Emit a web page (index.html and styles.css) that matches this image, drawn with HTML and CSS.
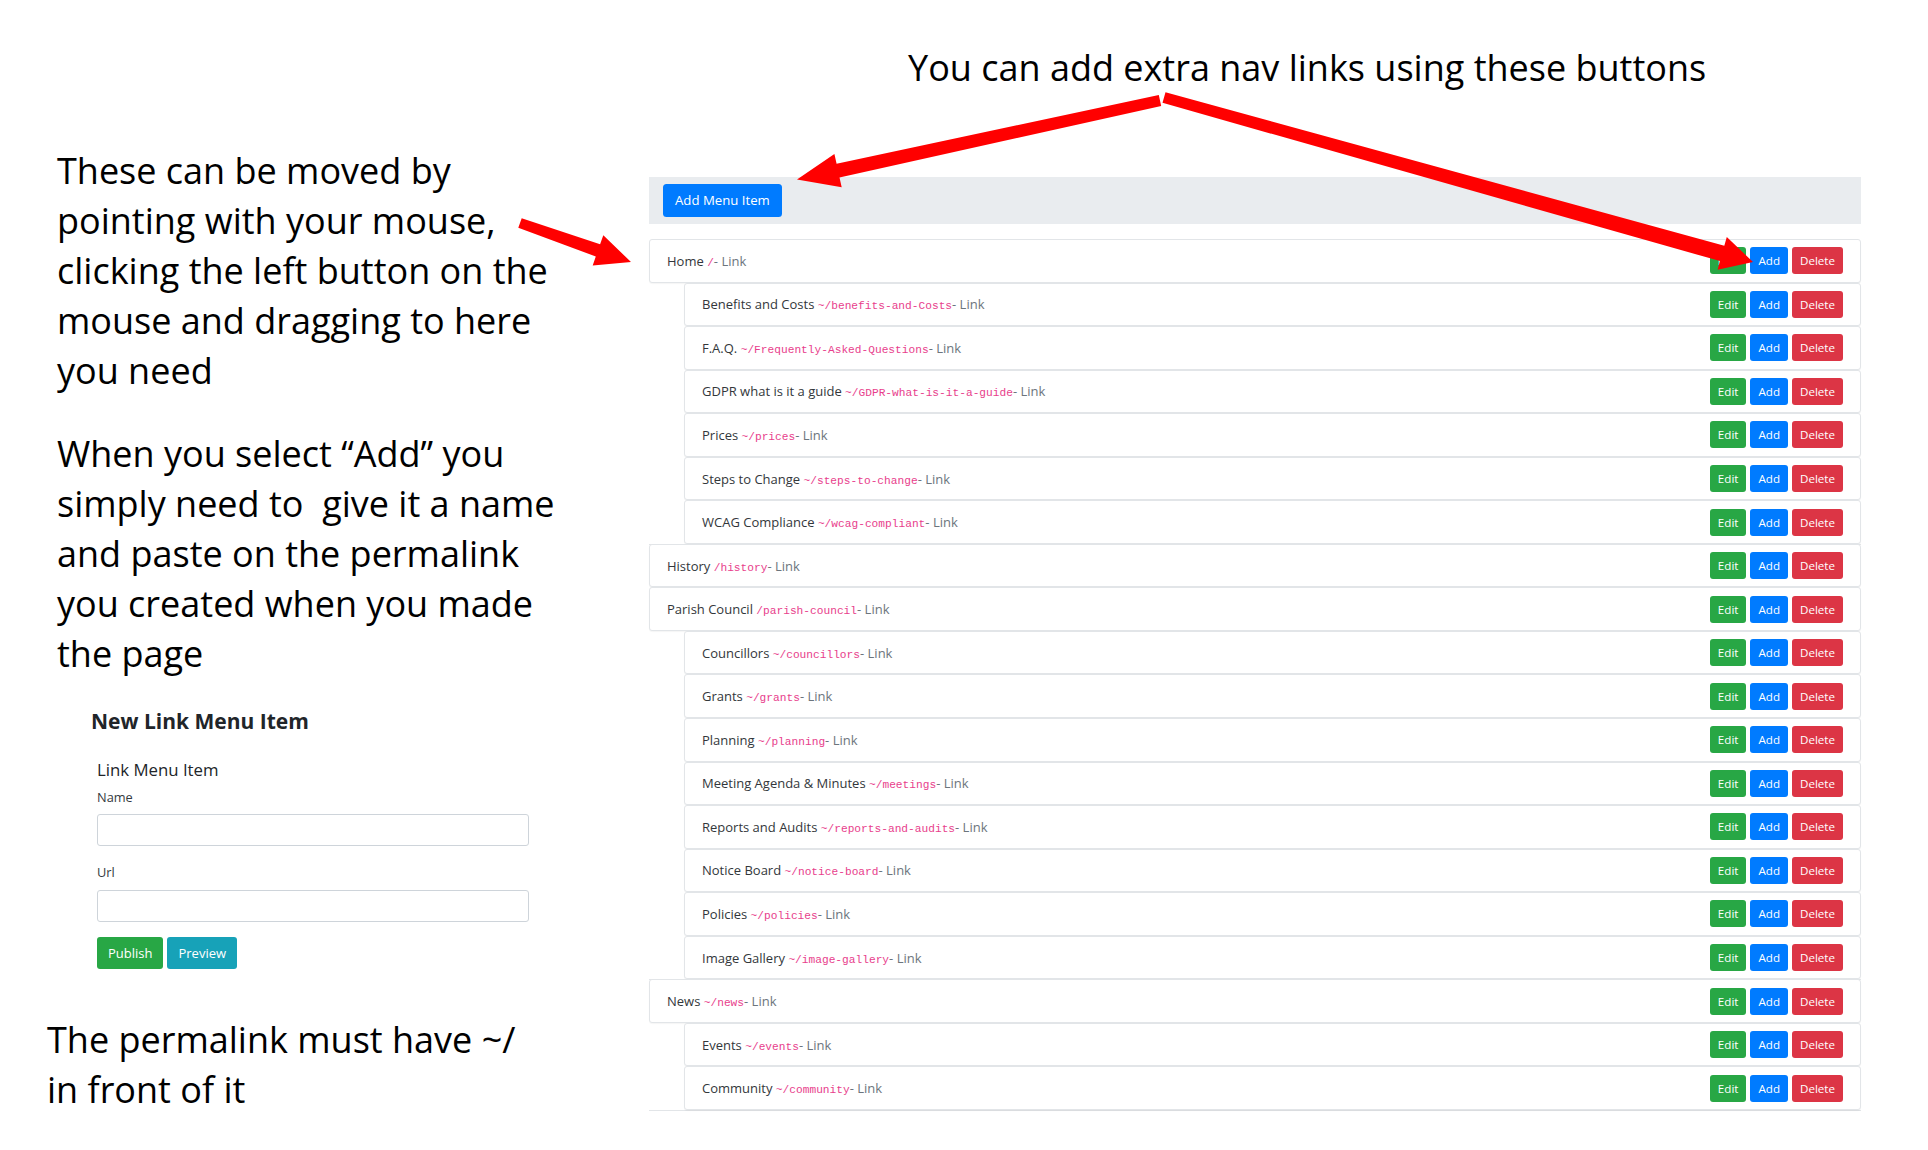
FILE: index.html
```html
<!DOCTYPE html>
<html lang="en">
<head>
<meta charset="utf-8">
<title>Menu editor help</title>
<link rel="stylesheet" href="styles.css">
</head>
<body>
<div class="page">
  <section class="notes">
    <p class="note">These can be moved by<br>pointing with your mouse,<br>clicking the left button on the<br>mouse and dragging to here<br>you need</p>
    <p class="note note-2">When you select “Add” you<br>simply need to&nbsp; give it a name<br>and paste on the permalink<br>you created when you made<br>the page</p>
    <div class="form-card">
      <h3 class="form-title">New Link Menu Item</h3>
      <div class="form">
        <div class="form-sub">Link Menu Item</div>
        <label class="form-label">Name</label>
        <input class="form-input" type="text">
        <label class="form-label form-label-url">Url</label>
        <input class="form-input form-input-url" type="text">
        <div class="form-actions">
          <button class="btn btn-publish">Publish</button>
          <button class="btn btn-preview">Preview</button>
        </div>
      </div>
    </div>
    <p class="note note-3">The permalink must have ~/<br>in front of it</p>
  </section>

  <section class="main">
    <div class="title">You can add extra nav links using these buttons</div>
    <div class="toolbar"><button class="btn btn-add-menu">Add Menu Item</button></div>
    <ul class="menu">
      <li class="group has-sub">
        <div class="row"><span class="label">Home <code>/</code><span class="muted">- Link</span></span><span class="actions"><button class="btn-sm edit">Edit</button><button class="btn-sm add">Add</button><button class="btn-sm del">Delete</button></span></div>
        <ul class="sub">
          <li><div class="row"><span class="label">Benefits and Costs <code>~/benefits-and-Costs</code><span class="muted">- Link</span></span><span class="actions"><button class="btn-sm edit">Edit</button><button class="btn-sm add">Add</button><button class="btn-sm del">Delete</button></span></div></li>
          <li><div class="row"><span class="label">F.A.Q. <code>~/Frequently-Asked-Questions</code><span class="muted">- Link</span></span><span class="actions"><button class="btn-sm edit">Edit</button><button class="btn-sm add">Add</button><button class="btn-sm del">Delete</button></span></div></li>
          <li><div class="row"><span class="label">GDPR what is it a guide <code>~/GDPR-what-is-it-a-guide</code><span class="muted">- Link</span></span><span class="actions"><button class="btn-sm edit">Edit</button><button class="btn-sm add">Add</button><button class="btn-sm del">Delete</button></span></div></li>
          <li><div class="row"><span class="label">Prices <code>~/prices</code><span class="muted">- Link</span></span><span class="actions"><button class="btn-sm edit">Edit</button><button class="btn-sm add">Add</button><button class="btn-sm del">Delete</button></span></div></li>
          <li><div class="row"><span class="label">Steps to Change <code>~/steps-to-change</code><span class="muted">- Link</span></span><span class="actions"><button class="btn-sm edit">Edit</button><button class="btn-sm add">Add</button><button class="btn-sm del">Delete</button></span></div></li>
          <li><div class="row"><span class="label">WCAG Compliance <code>~/wcag-compliant</code><span class="muted">- Link</span></span><span class="actions"><button class="btn-sm edit">Edit</button><button class="btn-sm add">Add</button><button class="btn-sm del">Delete</button></span></div></li>
        </ul>
      </li>
      <li class="group">
        <div class="row"><span class="label">History <code>/history</code><span class="muted">- Link</span></span><span class="actions"><button class="btn-sm edit">Edit</button><button class="btn-sm add">Add</button><button class="btn-sm del">Delete</button></span></div>
      </li>
      <li class="group has-sub">
        <div class="row"><span class="label">Parish Council <code>/parish-council</code><span class="muted">- Link</span></span><span class="actions"><button class="btn-sm edit">Edit</button><button class="btn-sm add">Add</button><button class="btn-sm del">Delete</button></span></div>
        <ul class="sub">
          <li><div class="row"><span class="label">Councillors <code>~/councillors</code><span class="muted">- Link</span></span><span class="actions"><button class="btn-sm edit">Edit</button><button class="btn-sm add">Add</button><button class="btn-sm del">Delete</button></span></div></li>
          <li><div class="row"><span class="label">Grants <code>~/grants</code><span class="muted">- Link</span></span><span class="actions"><button class="btn-sm edit">Edit</button><button class="btn-sm add">Add</button><button class="btn-sm del">Delete</button></span></div></li>
          <li><div class="row"><span class="label">Planning <code>~/planning</code><span class="muted">- Link</span></span><span class="actions"><button class="btn-sm edit">Edit</button><button class="btn-sm add">Add</button><button class="btn-sm del">Delete</button></span></div></li>
          <li><div class="row"><span class="label">Meeting Agenda &amp; Minutes <code>~/meetings</code><span class="muted">- Link</span></span><span class="actions"><button class="btn-sm edit">Edit</button><button class="btn-sm add">Add</button><button class="btn-sm del">Delete</button></span></div></li>
          <li><div class="row"><span class="label">Reports and Audits <code>~/reports-and-audits</code><span class="muted">- Link</span></span><span class="actions"><button class="btn-sm edit">Edit</button><button class="btn-sm add">Add</button><button class="btn-sm del">Delete</button></span></div></li>
          <li><div class="row"><span class="label">Notice Board <code>~/notice-board</code><span class="muted">- Link</span></span><span class="actions"><button class="btn-sm edit">Edit</button><button class="btn-sm add">Add</button><button class="btn-sm del">Delete</button></span></div></li>
          <li><div class="row"><span class="label">Policies <code>~/policies</code><span class="muted">- Link</span></span><span class="actions"><button class="btn-sm edit">Edit</button><button class="btn-sm add">Add</button><button class="btn-sm del">Delete</button></span></div></li>
          <li><div class="row"><span class="label">Image Gallery <code>~/image-gallery</code><span class="muted">- Link</span></span><span class="actions"><button class="btn-sm edit">Edit</button><button class="btn-sm add">Add</button><button class="btn-sm del">Delete</button></span></div></li>
        </ul>
      </li>
      <li class="group has-sub">
        <div class="row"><span class="label">News <code>~/news</code><span class="muted">- Link</span></span><span class="actions"><button class="btn-sm edit">Edit</button><button class="btn-sm add">Add</button><button class="btn-sm del">Delete</button></span></div>
        <ul class="sub">
          <li><div class="row"><span class="label">Events <code>~/events</code><span class="muted">- Link</span></span><span class="actions"><button class="btn-sm edit">Edit</button><button class="btn-sm add">Add</button><button class="btn-sm del">Delete</button></span></div></li>
          <li><div class="row"><span class="label">Community <code>~/community</code><span class="muted">- Link</span></span><span class="actions"><button class="btn-sm edit">Edit</button><button class="btn-sm add">Add</button><button class="btn-sm del">Delete</button></span></div></li>
        </ul>
      </li>
    </ul>
  </section>

  <svg class="arrows" width="1928" height="1150" viewBox="0 0 1928 1150" aria-hidden="true">
    <polygon points="1158.8,95.1 836.6,163.7 834.4,154.0 797,179.5 841.7,187.2 839.5,177.4 1161.2,105.9"/>
    <polygon points="1165.5,92.2 1724.3,245.7 1726.8,237.0 1753,262 1717.6,269.8 1720.0,261.1 1162.5,102.8"/>
    <polygon points="521.7,218.3 600.1,244.3 603.3,235.3 631,262 592.7,265.5 595.8,256.5 518.3,227.7"/>
  </svg>
</div>
</body>
</html>
```

FILE: styles.css
```css
* { box-sizing: border-box; }

html, body {
  margin: 0;
  padding: 0;
  background: #ffffff;
}

body {
  width: 1928px;
  height: 1150px;
  overflow: hidden;
  font-family: "Open Sans", "Noto Sans", sans-serif;
  color: #212529;
}

.page {
  position: relative;
  display: flex;
  width: 1928px;
  height: 1150px;
}

/* ---------- left annotations ---------- */
.notes {
  flex: none;
  width: 649px;
  padding: 146px 0 0 57px;
}

.note {
  margin: 0;
  font-family: "Open Sans", "Noto Sans", sans-serif;
  font-size: 36px;
  line-height: 50px;
  color: #000;
  white-space: nowrap;
}

.note-2 { margin-top: 33px; }

.note-3 {
  margin-top: 46px;
  margin-left: -10px;
}

/* ---------- form ---------- */
.form-card {
  margin-top: 29px;
  padding-left: 34px;
}

.form-title {
  margin: 0;
  font-size: 21px;
  line-height: 26px;
  font-weight: 700;
  letter-spacing: 0;
  color: #212529;
}

.form {
  padding-left: 6px;
  display: flex;
  flex-direction: column;
  align-items: flex-start;
}

.form-sub {
  margin-top: 26px;
  font-size: 16.8px;
  line-height: 20px;
  color: #212529;
}

.form-label {
  margin-top: 9px;
  font-size: 12.8px;
  line-height: 16px;
  color: #343a40;
}

.form-label-url { margin-top: 18px; }

.form-input {
  display: block;
  width: 432px;
  height: 32px;
  margin-top: 9px;
  border: 1px solid #ced4da;
  border-radius: 3px;
  background: #fff;
}

.form-input-url { margin-top: 10px; }

.form-actions {
  display: flex;
  gap: 4px;
  margin-top: 15px;
}

.btn {
  height: 32px;
  padding: 0 11px;
  border: none;
  border-radius: 3px;
  color: #fff;
  font-family: "Open Sans", "Noto Sans", sans-serif;
  font-size: 13px;
  line-height: 32px;
}

.btn-publish { background: #28a745; }
.btn-preview { background: #17a2b8; }

/* ---------- main panel ---------- */
.main {
  flex: none;
  width: 1212px;
  padding-top: 43px;
}

.title {
  padding-left: 259px;
  font-size: 36px;
  line-height: 50px;
  color: #000;
  white-space: nowrap;
}

.toolbar {
  margin-top: 84px;
  height: 47px;
  padding: 7px 14px;
  background: #e9ecef;
}

.btn-add-menu {
  height: 33px;
  padding: 0 12px;
  background: #007bff;
  font-size: 13.2px;
  line-height: 33px;
  border-radius: 3.5px;
}

.menu, .sub {
  list-style: none;
  margin: 0;
  padding: 0;
}

.menu { margin-top: 15px; }

.sub { margin-left: 35px; }

.group.has-sub {
  border-bottom: 1px solid #e2e5e8;
  margin-bottom: -1px;
}

.row {
  display: flex;
  align-items: center;
  justify-content: space-between;
  height: 43.55px;
  padding: 0 17px;
  border: 1px solid #e2e5e8;
  border-radius: 3px;
  background: #fff;
  box-shadow: 0 1px 1px rgba(0, 0, 0, 0.04);
}

.label {
  font-size: 13px;
  color: #33373b;
  white-space: nowrap;
}

.label code {
  font-family: "Liberation Mono", "DejaVu Sans Mono", monospace;
  font-size: 11.2px;
  color: #e83e8c;
}

.muted { color: #6c757d; }

.actions {
  display: flex;
  gap: 4px;
}

.btn-sm {
  height: 27px;
  padding: 0 8px;
  border: none;
  border-radius: 3px;
  color: #fff;
  font-family: "Open Sans", "Noto Sans", sans-serif;
  font-size: 11.6px;
  line-height: 27px;
}

.btn-sm.edit { background: #28a745; }
.btn-sm.add { background: #007bff; }
.btn-sm.del { background: #dc3545; }

/* ---------- annotation arrows ---------- */
.arrows {
  position: absolute;
  top: 0;
  left: 0;
  pointer-events: none;
  fill: #ff0000;
}
```
